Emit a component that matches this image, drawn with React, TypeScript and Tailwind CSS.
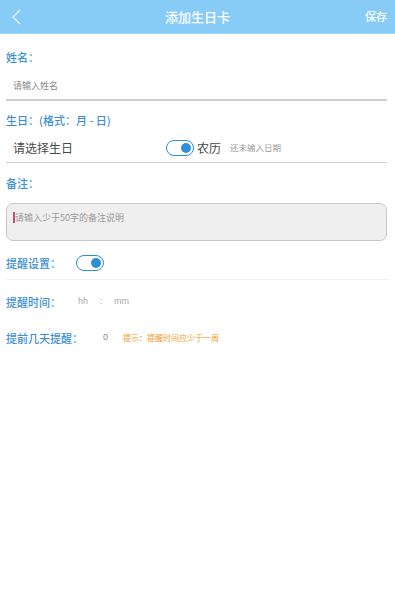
import React from "react";

function Toggle() {
  return (
    <div className="w-[28px] h-[16px] rounded-full border-[1.5px] border-[#2f8fd6] bg-white flex items-center justify-end pr-[2px]">
      <div className="w-[10px] h-[10px] rounded-full bg-[#2f8fd6]" />
    </div>
  );
}

export default function App() {
  const font = { fontFamily: '"Noto Sans CJK SC", "Noto Sans", sans-serif' };
  return (
    <div className="w-[395px] h-[603px] bg-white overflow-hidden relative" style={font}>
      <div className="h-[34px] bg-[#87ccf7] flex items-center justify-between relative border-b border-[#a9d9f7]">
        <svg width="14" height="16" viewBox="0 0 14 16" className="ml-[10px]">
          <path d="M10 1 L3 8 L10 15" stroke="#e6f4fd" strokeWidth="1.3" fill="none" />
        </svg>
        <div className="absolute left-0 right-0 text-center text-white text-[13px] font-medium leading-none">添加生日卡</div>
        <div className="text-white text-[11px] font-medium mr-[8px] leading-none">保存</div>
      </div>

      <div className="px-[6px]">
        <div className="pt-[18px] text-[11px] font-medium text-[#3b8fd8] leading-none">姓名：</div>
        <div className="pt-[18px] pl-[7px] pb-[9px] text-[9px] text-[#8a8a8a] leading-none">请输入姓名</div>
        <div className="h-[1.5px] bg-[#cfcfcf] mr-[2px]" />

        <div className="pt-[14px] text-[11px] font-medium text-[#3b8fd8] leading-none">生日：(格式：月 - 日)</div>
        <div className="flex items-center h-[30px] mt-[7px] pl-[7px]">
          <div className="text-[12px] text-[#4a4a4a] w-[153px]">请选择生日</div>
          <Toggle />
          <div className="text-[12px] text-[#4a4a4a] ml-[3px]">农历</div>
          <div className="text-[8.5px] text-[#9a9a9a] ml-[9px]">还未输入日期</div>
        </div>
        <div className="h-[1.5px] bg-[#cfcfcf] mr-[2px] mt-[-1px]" />

        <div className="pt-[15px] text-[11px] font-medium text-[#3b8fd8] leading-none">备注：</div>
        <div className="mt-[14px] h-[38px] mr-[2px] rounded-[7px] border border-[#c8c8c8] bg-[#efefef] pt-[7px] pl-[6px] flex items-start">
          <div className="w-[2px] h-[11px] bg-[#d0447a] mt-[1px]" />
          <div className="text-[9px] text-[#9a9a9a] leading-[13px]">请输入少于50字的备注说明</div>
        </div>

        <div className="flex items-center mt-[13px] h-[18px]">
          <div className="text-[11px] font-medium text-[#3b8fd8] w-[70px]">提醒设置：</div>
          <Toggle />
        </div>
      </div>
      <div className="h-px bg-[#f0f0f0] mt-[7px] mx-[6px]" />

      <div className="px-[6px] flex items-center mt-[14px] h-[16px]">
        <div className="text-[11px] font-medium text-[#3b8fd8] w-[72px]">提醒时间：</div>
        <div className="text-[9px] text-[#a8a8a8] w-[22px]" style={{ fontFamily: '"Liberation Sans", sans-serif' }}>hh</div>
        <div className="text-[9px] text-[#a8a8a8] w-[14px]" style={{ fontFamily: '"Liberation Sans", sans-serif' }}>:</div>
        <div className="text-[9px] text-[#a8a8a8]" style={{ fontFamily: '"Liberation Sans", sans-serif' }}>mm</div>
      </div>

      <div className="px-[6px] flex items-center mt-[20px] h-[16px]">
        <div className="text-[11px] font-medium text-[#3b8fd8] w-[97px]">提前几天提醒：</div>
        <div className="text-[9px] text-[#8a8a8a] w-[20px]" style={{ fontFamily: '"Liberation Sans", sans-serif' }}>0</div>
        <div className="text-[8px] text-[#f19a2a]">提示：提醒时间应少于一周</div>
      </div>
    </div>
  );
}
